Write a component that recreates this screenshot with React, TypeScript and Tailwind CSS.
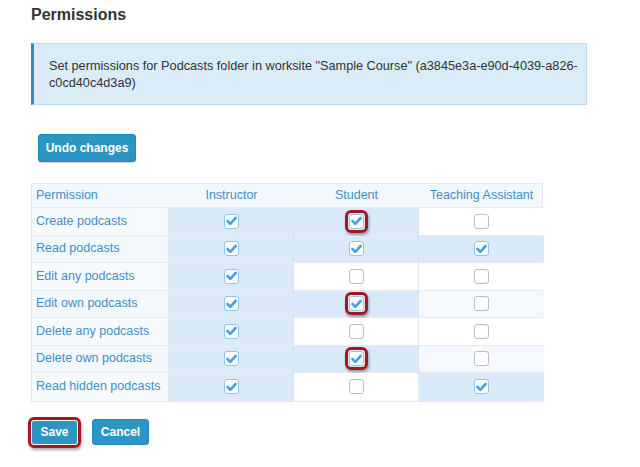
import React from "react";

const rows: { name: string; v: [boolean, boolean, boolean]; hl: boolean }[] = [
  { name: "Create podcasts", v: [true, true, false], hl: true },
  { name: "Read podcasts", v: [true, true, true], hl: false },
  { name: "Edit any podcasts", v: [true, false, false], hl: false },
  { name: "Edit own podcasts", v: [true, true, false], hl: true },
  { name: "Delete any podcasts", v: [true, false, false], hl: false },
  { name: "Delete own podcasts", v: [true, true, false], hl: true },
  { name: "Read hidden podcasts", v: [true, false, true], hl: false },
];

function Box({ checked }: { checked: boolean }) {
  if (checked) {
    return (
      <span className="flex h-[15px] w-[15px] items-center justify-center rounded-[3px] border border-[#8cc6ee] bg-white">
        <svg width="11" height="10" viewBox="0 0 11 10">
          <path d="M1.5 5 L4.3 7.8 L9.6 2" fill="none" stroke="#4a9fe0" strokeWidth="2.6" strokeLinecap="round" strokeLinejoin="round" />
        </svg>
      </span>
    );
  }
  return <span className="block h-[15px] w-[15px] rounded-[3px] border border-[#bdbdbd] bg-white" />;
}

function Highlight({ children }: { children: React.ReactNode }) {
  return (
    <span className="flex h-[23px] w-[23px] items-center justify-center rounded-[6px] border-[3px] border-[#a3181d] shadow-[1px_2px_3px_rgba(0,0,0,0.35)]">
      {children}
    </span>
  );
}

export default function App() {
  return (
    <div className="min-h-[467px] w-[640px] bg-white pl-[31px] pt-[4px] text-[#333]" style={{ fontFamily: '"Liberation Sans", Arial, sans-serif' }}>
      <h2 className="text-[16px] font-bold leading-[22px] text-[#333]">Permissions</h2>
      <div className="mt-[17px] w-[556px] border border-[#b7dcef] border-l-[3px] border-l-[#2b8dc2] bg-[#d9ecf7] pb-[12px] pl-[15px] pr-[2px] pt-[14px] text-[12.7px] leading-[17px] text-[#333]">
        <div className="whitespace-nowrap">Set permissions for Podcasts folder in worksite "Sample Course" (a3845e3a-e90d-4039-a826-</div>
        <div>c0cd40c4d3a9)</div>
      </div>
      <div className="ml-[7px] mt-[29px]">
        <button className="h-[28px] w-[98px] rounded-[3px] border border-[#2586b3] bg-[#2b96c4] text-[12px] font-bold text-white shadow-[0_1px_1px_rgba(0,0,0,0.15)]">
          Undo changes
        </button>
      </div>
      <div className="mt-[21px] w-[512px] border border-[#e3e9ee] text-[12.5px] text-[#3c8fc7]">
        <div className="grid h-[24px] grid-cols-[137px_125px_125px_125px] items-center border-b border-[#e3e9ee] bg-[#f3f8fc]">
          <div className="pl-[4px]">Permission</div>
          <div className="text-center">Instructor</div>
          <div className="text-center">Student</div>
          <div className="text-center">Teaching Assistant</div>
        </div>
        {rows.map((r, i) => {
          const alt = i % 2 === 1;
          return (
            <div
              key={r.name}
              className={`grid h-[27.5px] grid-cols-[137px_125px_125px_125px] ${i < rows.length - 1 ? "border-b border-[#e6ebef]" : ""}`}
            >
              <div className={`flex items-center border-r border-[#e3e8ec] pl-[4px] ${alt ? "bg-[#f3f8fd]" : "bg-[#f8fbfe]"}`}>{r.name}</div>
              {r.v.map((c, j) => (
                <div
                  key={j}
                  className={`flex items-center justify-center ${j < 2 ? "border-r border-dotted border-[#d5dce3]" : ""} ${
                    c ? "bg-[#dbeafa]" : alt ? "bg-[#f5f9fd]" : "bg-white"
                  }`}
                >
                  {j === 1 && r.hl ? (
                    <Highlight>
                      <Box checked={c} />
                    </Highlight>
                  ) : (
                    <Box checked={c} />
                  )}
                </div>
              ))}
            </div>
          );
        })}
      </div>
      <div className="-ml-[3px] mt-[15px] flex items-center gap-[11px]">
        <span className="rounded-[6px] border-[3px] border-[#a3181d] p-[1px] shadow-[1px_2px_3px_rgba(0,0,0,0.35)]">
          <button className="block h-[23px] w-[45px] rounded-[2px] bg-[#2b96c4] text-[12px] font-bold text-white">Save</button>
        </span>
        <button className="h-[26px] w-[57px] rounded-[3px] border border-[#2586b3] bg-[#2b96c4] text-[12px] font-bold text-white">Cancel</button>
      </div>
    </div>
  );
}
